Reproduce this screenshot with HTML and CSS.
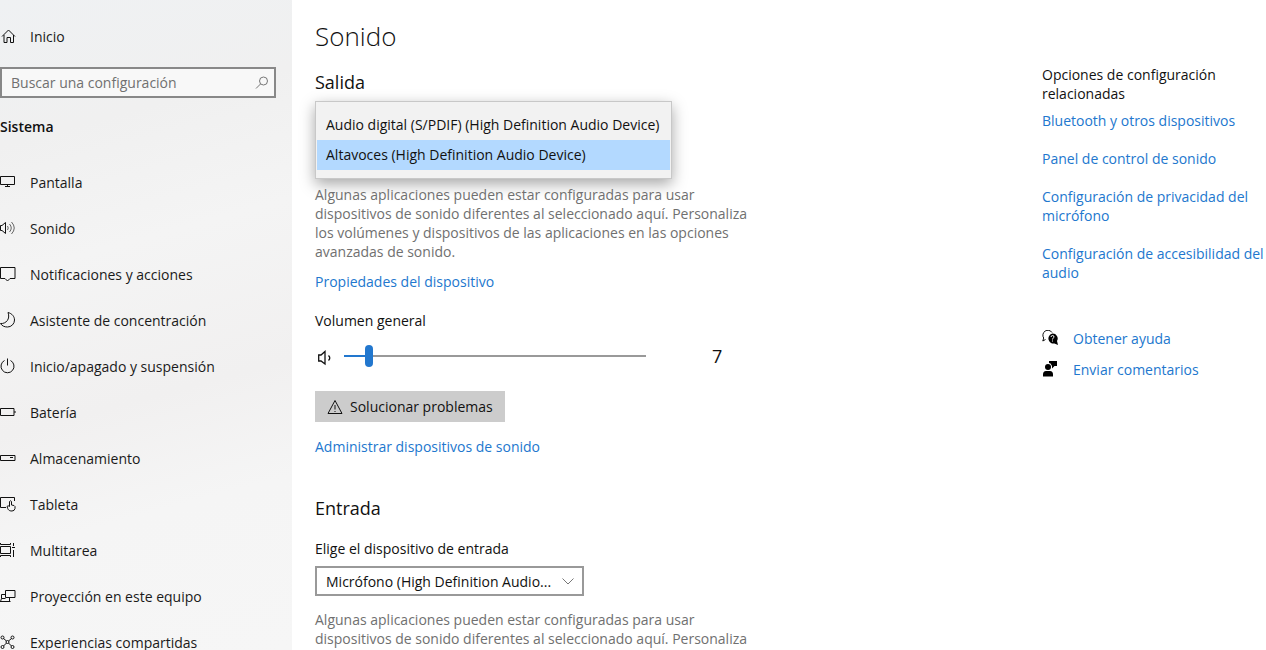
FILE: index.html
```html
<!DOCTYPE html>
<html lang="es">
<head>
    <meta charset="utf-8">
    <title>Configuración - Sonido</title>
    <link rel="stylesheet" href="styles.css">
</head>
<body>
    <div class="app">
        <aside class="sidebar">
            <a class="nav-item" href="#">
                <svg class="icon" viewBox="0 0 16 16"><path d="M2 8.500 8.500 2l6.500 6.500M4 7v7.500h3v-5h3.500v5H13.500V7"/></svg>
                Inicio
            </a>
            <div class="search">
                <input type="text" placeholder="Buscar una configuración" aria-label="Buscar una configuración">
                <svg class="icon" viewBox="0 0 16 16"><circle cx="9.500" cy="6" r="4"/><path d="M6.500 9 2 13.500"/></svg>
            </div>
            <h2 class="group-title">Sistema</h2>
            <nav>
                <a class="nav-item" href="#">
                    <svg class="icon" viewBox="0 0 16 16"><path d="M.5 2.500h14v8H.5zM7.500 10.500v2M5 12.500h5"/></svg>
                    Pantalla
                </a>
                <a class="nav-item" href="#">
                    <svg class="icon" viewBox="0 0 16 16"><path d="M.5 5.500h1.500L5.500 2.500v11L2 10.500H.5z"/><path class="soft" d="M7.500 6q1.500 2 0 4M9.500 4q3.500 4 0 8M11.500 2q5.500 6 0 12"/></svg>
                    Sonido
                </a>
                <a class="nav-item" href="#">
                    <svg class="icon" viewBox="0 0 16 16"><path d="M.5 1.500H15v11h-5L7.500 15 5 12.500H.5z"/></svg>
                    Notificaciones y acciones
                </a>
                <a class="nav-item" href="#">
                    <svg class="icon" viewBox="0 0 16 16"><path d="M8 .5c4 1 6.500 4 6.500 7.500a7 7 0 0 1-7 7C4.500 15 2 14 .5 11.500 6 12 10.500 7 8 .5z"/></svg>
                    Asistente de concentración
                </a>
                <a class="nav-item" href="#">
                    <svg class="icon" viewBox="0 0 16 16"><path d="M7.500.5v7M4.500 2.500a6.500 6.500 0 1 0 6 0"/></svg>
                    Inicio/apagado y suspensión
                </a>
                <a class="nav-item" href="#">
                    <svg class="icon" viewBox="0 0 16 16"><path d="M.5 4.500h13.500v7H.5zM15 7v2"/></svg>
                    Batería
                </a>
                <a class="nav-item" href="#">
                    <svg class="icon" viewBox="0 0 16 16"><path d="M.5 5.500H15v5H.5zM10 7.500h3"/></svg>
                    Almacenamiento
                </a>
                <a class="nav-item" href="#">
                    <svg class="icon" viewBox="0 0 16 16"><path d="M6 11.500H.5v-10h14V5"/><path d="M9.500 10.500V5.500q1-1.500 2 0V9l2.500.5q1.500.5 1 3-.5 2.500-3 2.500c-3 0-4-1-5-4.500q1-1.500 2.500 0"/></svg>
                    Tableta
                </a>
                <a class="nav-item" href="#">
                    <svg class="icon" viewBox="0 0 16 16"><path d="M.5 1v1.500h10V1M.5 4.500h10v7H.5zM.5 15v-1.500h10V15M13.500 1v3M13.500 8v7M12 5.500h3"/></svg>
                    Multitarea
                </a>
                <a class="nav-item" href="#">
                    <svg class="icon" viewBox="0 0 16 16"><path d="M5.500 2.500H15v7H5.500zM5.500 6.500h-4v4M0 13.500h10.500M1.500 10.500l-1 3M9.500 10v3.500M1.500 10.500h4"/></svg>
                    Proyección en este equipo
                </a>
                <a class="nav-item" href="#">
                    <svg class="icon" viewBox="0 0 16 16"><circle cx="2.500" cy="3.500" r="1.500"/><circle cx="12.500" cy="3.500" r="1.500"/><circle cx="2.500" cy="13" r="1.500"/><circle cx="12.500" cy="13" r="1.500"/><circle cx="7.500" cy="8" r="1.500"/><path d="m3.500 4.500 3 2.500M11.500 4.500l-3 2.500M3.500 12l3-3M11.500 12l-3-3"/></svg>
                    Experiencias compartidas
                </a>
            </nav>
        </aside>

        <main class="content">
            <h1>Sonido</h1>

            <section class="output">
                <h2>Salida</h2>
                <select class="device-list" size="2" aria-label="Dispositivo de salida">
                    <option>Audio digital (S/PDIF) (High Definition Audio Device)</option>
                    <option selected>Altavoces (High Definition Audio Device)</option>
                </select>
                <p class="hint">Algunas aplicaciones pueden estar configuradas para usar dispositivos de sonido diferentes al seleccionado aquí. Personaliza los volúmenes y dispositivos de las aplicaciones en las opciones avanzadas de sonido.</p>
                <a class="properties" href="#">Propiedades del dispositivo</a>
                <label class="volume-label" for="volume">Volumen general</label>
                <div class="volume">
                    <svg class="icon" viewBox="0 0 20 20"><path d="M3.700 9h2.300L10 5.500v12.500L6 15H3.700zM13.500 9.500q2.500 2.500 0 5" stroke-width="1.300"/></svg>
                    <input type="range" id="volume" min="0" max="100" value="7">
                    <output for="volume">7</output>
                </div>
                <button class="troubleshoot" type="button">
                    <svg class="icon" viewBox="0 0 16 16"><path d="M8 1.500 15 14.500H1zM8 6v4.500M8 12v1"/></svg>
                    Solucionar problemas
                </button>
                <a class="manage" href="#">Administrar dispositivos de sonido</a>
            </section>

            <section class="input">
                <h2>Entrada</h2>
                <label for="mic">Elige el dispositivo de entrada</label>
                <div class="combo">
                    <select id="mic">
                        <option>Micrófono (High Definition Audio...</option>
                    </select>
                    <svg class="icon" viewBox="0 0 16 16"><path d="m2.500 5.500 5.500 5.500 5.500-5.500"/></svg>
                </div>
                <p class="hint">Algunas aplicaciones pueden estar configuradas para usar dispositivos de sonido diferentes al seleccionado aquí. Personaliza los volúmenes y dispositivos de las aplicaciones en las opciones avanzadas de sonido.</p>
            </section>
        </main>

        <aside class="related">
            <h3>Opciones de configuración relacionadas</h3>
            <div class="related-links">
                <a href="#">Bluetooth y otros dispositivos</a>
                <a href="#">Panel de control de sonido</a>
                <a href="#">Configuración de privacidad del micrófono</a>
                <a href="#">Configuración de accesibilidad del audio</a>
            </div>
            <div class="help-links">
                <a href="#">
                    <svg class="icon" viewBox="0 0 16 16"><path d="M3.500 9.500.8 11l.9-3A4.800 4.800 0 1 1 10 2.500"/><path class="solid" d="M10.500 3.500a5 5 0 0 1 4.500 7.500l1 4-3.500-1.500a5 5 0 1 1-2-10z"/><path class="mark" d="M9 7q.2-1.500 1.600-1.500T12 7c0 1-1.500 1-1.500 2.500M10.500 10.500v1"/></svg>
                    Obtener ayuda
                </a>
                <a href="#">
                    <svg class="icon" viewBox="0 0 16 16"><circle class="solid" cx="6" cy="6" r="3"/><path class="solid" d="M1 15.500v-2Q1 10 4 10h4q3 0 3 3.500v2zM7 0h8v5h-2.500L10 7.500V5L8.500 2.500 7 2z"/></svg>
                    Enviar comentarios
                </a>
            </div>
        </aside>
    </div>

    <script>
        const slider = document.getElementById('volume');
        const output = document.querySelector('.volume output');

        slider.addEventListener('input', function() {
            output.textContent = slider.value;
            slider.style.setProperty('--level', slider.value + '%');
        });
    </script>
</body>
</html>
```

FILE: styles.css
```css
* {
    box-sizing: border-box;
}
body {
    margin: 0;
    background: #fff;
    color: #111;
    font-family: 'Open Sans', 'Noto Sans', sans-serif;
    font-size: 14px;
    line-height: 19px;
}
h1, h2, h3, p {
    margin: 0;
    font-weight: 400;
}
a {
    color: #2277ce;
    text-decoration: none;
}
input, select, button {
    font: inherit;
    color: inherit;
}
.app {
    display: flex;
    height: 100vh;
    overflow: hidden;
}
.icon {
    width: 16px;
    height: 16px;
    flex: none;
    fill: none;
    stroke: #111;
}
.icon .soft {
    stroke: #666;
}
.icon .solid {
    fill: #000;
    stroke: none;
}
.icon .mark {
    stroke: #fff;
}

/* sidebar */
.sidebar {
    flex: 0 0 292px;
    padding-top: 13px;
    background: linear-gradient(165deg, #eff1f3 0%, #f0f0f0 20%, #f4f4f4 38%, #f1f0f0 60%, #f5f5f5 76%, #f6f6f6 100%);
}
.nav-item {
    display: flex;
    align-items: center;
    gap: 14px;
    height: 46px;
    color: #1a1a1a;
}
.search {
    display: flex;
    align-items: center;
    height: 31px;
    margin: 8px 16px 0 0;
    padding: 0 4px 0 9px;
    background: #f8f8f8;
    border: 2px solid #888;
}
.search input {
    flex: 1;
    min-width: 0;
    padding: 0;
    border: 0;
    outline: 0;
    background: none;
}
.search input::placeholder {
    color: #707070;
}
.search .icon {
    stroke: #777;
}
.group-title {
    margin: 19px 0 22px;
    font-size: 14px;
    font-weight: 600;
    line-height: 20px;
}

/* main column */
.content {
    flex: 1;
    padding: 18px 0 0 23px;
}
.content h1 {
    font-size: 26px;
    font-weight: 300;
    line-height: 36px;
}
.content h2 {
    font-size: 18px;
    line-height: 28px;
}
.content label, .content section > a {
    display: block;
    width: fit-content;
    line-height: 20px;
}
.output {
    margin-top: 14px;
}
.device-list {
    display: block;
    width: 357px;
    height: 78px;
    margin-top: 5px;
    padding: 8px 1px;
    overflow: hidden;
    background: #f2f2f2;
    border: 1px solid #c8c8c8;
    border-radius: 0;
    outline: 0;
    box-shadow: 0 5px 14px rgba(0, 0, 0, 0.35);
}
.device-list option {
    height: 30px;
    padding: 5px 9px;
    color: #111;
}
.device-list option:checked {
    background: #b3d9ff linear-gradient(#b3d9ff, #b3d9ff);
}
.hint {
    max-width: 440px;
    margin-top: 6px;
    color: #707070;
}
.properties {
    margin-top: 11px;
}
.volume-label {
    margin-top: 19px;
}
.volume {
    display: flex;
    align-items: center;
    height: 26px;
    margin-top: 12px;
}
.volume .icon {
    width: 20px;
    height: 20px;
}
.volume input {
    --level: 7%;
    appearance: none;
    width: 302px;
    height: 22px;
    margin: 0 0 0 9px;
    background: linear-gradient(to right, #2277ce var(--level), #999 var(--level)) center / 100% 2px no-repeat;
}
.volume input::-webkit-slider-thumb {
    appearance: none;
    width: 8px;
    height: 22px;
    border-radius: 4px;
    background: #2277ce;
}
.volume output {
    margin-left: 66px;
    font-size: 18px;
}
.troubleshoot {
    display: flex;
    align-items: center;
    gap: 7px;
    height: 31px;
    margin-top: 22px;
    padding: 0 12px;
    background: #ccc;
    border: 0;
}
.manage {
    margin-top: 15px;
}
.input {
    margin-top: 37px;
}
.input label {
    margin-top: 17px;
}
.combo {
    display: grid;
    align-items: center;
    width: 269px;
    margin-top: 7px;
}
.combo select, .combo .icon {
    grid-area: 1 / 1;
}
.combo select {
    appearance: none;
    height: 30px;
    padding: 0 24px 0 9px;
    background: #fff;
    border: 2px solid #999;
    border-radius: 0;
}
.combo .icon {
    justify-self: end;
    margin-right: 8px;
    stroke: #777;
    pointer-events: none;
}
.input .hint {
    margin-top: 14px;
}

/* related settings */
.related {
    flex: 0 0 224px;
    padding-top: 65px;
}
.related h3 {
    font-size: 14px;
}
.related-links {
    display: flex;
    flex-direction: column;
    gap: 19px;
    margin-top: 8px;
}
.help-links {
    display: flex;
    flex-direction: column;
    gap: 11px;
    margin-top: 46px;
}
.help-links a {
    display: flex;
    align-items: center;
    gap: 15px;
    height: 20px;
}
```
